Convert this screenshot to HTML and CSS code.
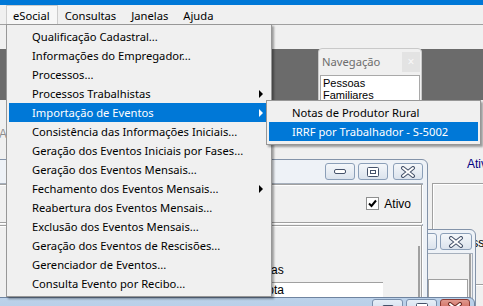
FILE: index.html
```html
<!DOCTYPE html>
<html lang="pt-BR">
    <head>
        <meta charset="UTF-8" />
        <title>eSocial</title>
        <link rel="stylesheet" href="styles.css">
    </head>
    <body>
        <div class="screen">
            <div class="caption"></div>

            <div class="menubar">
                <span class="menu-item open">eSocial</span>
                <span class="menu-item">Consultas</span>
                <span class="menu-item">Janelas</span>
                <span class="menu-item">Ajuda</span>
            </div>

            <div class="workspace">
                <div class="toolstrip"></div>
                <div class="mdi">
                    <!-- form maximized behind the child windows -->
                    <div class="form-back">
                        <span class="faded-label">Ano</span>
                        <span class="status-label">Ativo</span>
                        <div class="etched back-group"></div>
                        <span class="back-label">Classe</span>
                    </div>

                    <div class="nav-panel">
                        <div class="nav-title">
                            <span>Navegação</span>
                            <span class="nav-close">&times;</span>
                        </div>
                        <ul class="nav-list">
                            <li>Pessoas</li>
                            <li>Familiares</li>
                        </ul>
                    </div>

                    <div class="win win-b">
                        <div class="win-title">
                            <span class="cap-btn">
                                <svg width="12" height="6" viewBox="0 0 12 6"><rect x="0.5" y="0.5" width="11" height="4" rx="1.5" fill="#fff" stroke="#45526a"/></svg>
                            </span>
                            <span class="cap-btn">
                                <svg width="12" height="10" viewBox="0 0 12 10"><rect x="0.5" y="0.5" width="11" height="9" rx="1" fill="#fff" stroke="#45526a"/><rect x="3.5" y="3.5" width="5" height="3" fill="none" stroke="#45526a"/></svg>
                            </span>
                            <span class="cap-btn wide">
                                <svg width="16" height="12" viewBox="0 0 16 12"><path d="M3 2 L13 10 M13 2 L3 10" stroke="#45526a" stroke-width="4" stroke-linecap="round"/><path d="M3 2 L13 10 M13 2 L3 10" stroke="#fff" stroke-width="2" stroke-linecap="round"/></svg>
                            </span>
                        </div>
                        <div class="win-client">
                            <div class="b-panel">
                                <div class="b-box"></div>
                            </div>
                        </div>
                    </div>

                    <div class="win win-a">
                        <div class="win-title">
                            <span class="cap-btn">
                                <svg width="12" height="6" viewBox="0 0 12 6"><rect x="0.5" y="0.5" width="11" height="4" rx="1.5" fill="#fff" stroke="#45526a"/></svg>
                            </span>
                            <span class="cap-btn max">
                                <svg width="12" height="10" viewBox="0 0 12 10"><rect x="0.5" y="0.5" width="11" height="9" rx="1" fill="#fff" stroke="#45526a"/><rect x="3.5" y="3.5" width="5" height="3" fill="none" stroke="#45526a"/></svg>
                            </span>
                            <span class="cap-btn">
                                <svg width="16" height="12" viewBox="0 0 16 12"><path d="M3 2 L13 10 M13 2 L3 10" stroke="#45526a" stroke-width="4" stroke-linecap="round"/><path d="M3 2 L13 10 M13 2 L3 10" stroke="#fff" stroke-width="2" stroke-linecap="round"/></svg>
                            </span>
                        </div>
                        <div class="win-client">
                            <div class="etched group-top">
                                <span class="check">
                                    <svg width="11" height="11" viewBox="0 0 11 11"><path d="M2 5.5 L4.5 8 L9 2.5" fill="none" stroke="#000" stroke-width="2"/></svg>
                                </span>
                                <span class="check-text">Ativo</span>
                            </div>
                            <div class="etched group-main">
                                <div class="a-panel">
                                    <span class="field-label">Parcelas</span>
                                    <span class="textbox">Alíquota</span>
                                </div>
                            </div>
                        </div>
                    </div>

                    <div class="win win-c">
                        <div class="win-title">
                            <span class="cap-btn">
                                <svg width="12" height="6" viewBox="0 0 12 6"><rect x="0.5" y="0.5" width="11" height="4" rx="1.5" fill="#fff" stroke="#45526a"/></svg>
                            </span>
                            <span class="cap-btn">
                                <svg width="12" height="10" viewBox="0 0 12 10"><rect x="0.5" y="0.5" width="11" height="9" rx="1" fill="#fff" stroke="#45526a"/><rect x="3.5" y="3.5" width="5" height="3" fill="none" stroke="#45526a"/></svg>
                            </span>
                            <span class="cap-btn close">
                                <svg width="16" height="12" viewBox="0 0 16 12"><path d="M3 2 L13 10 M13 2 L3 10" stroke="#6b2a24" stroke-width="4" stroke-linecap="round"/><path d="M3 2 L13 10 M13 2 L3 10" stroke="#fff" stroke-width="2" stroke-linecap="round"/></svg>
                            </span>
                        </div>
                    </div>
                </div>
            </div>

            <ul class="dropdown main-menu">
                <li>Qualificação Cadastral...</li>
                <li>Informações do Empregador...</li>
                <li>Processos...</li>
                <li class="has-sub">Processos Trabalhistas</li>
                <li class="has-sub active">Importação de Eventos</li>
                <li>Consistência das Informações Iniciais...</li>
                <li>Geração dos Eventos Iniciais por Fases...</li>
                <li>Geração dos Eventos Mensais...</li>
                <li class="has-sub">Fechamento dos Eventos Mensais...</li>
                <li>Reabertura dos Eventos Mensais...</li>
                <li>Exclusão dos Eventos Mensais...</li>
                <li>Geração dos Eventos de Rescisões...</li>
                <li>Gerenciador de Eventos...</li>
                <li>Consulta Evento por Recibo...</li>
            </ul>

            <ul class="dropdown submenu">
                <li>Notas de Produtor Rural</li>
                <li class="active">IRRF por Trabalhador - S-5002</li>
            </ul>
        </div>
    </body>
</html>
```

FILE: styles.css
```css
body {
    margin: 0;
    background: #f0f0f0;
    font-family: "Noto Sans", sans-serif;
    font-size: 11.2px;
    color: #000;
}
.screen {
    position: relative;
    width: 483px;
    height: 306px;
    overflow: hidden;
    background: #f0f0f0;
}
.caption {
    height: 5px;
    background: #0078d7;
}

/* menu bar */
.menubar {
    display: flex;
    height: 19px;
    padding-left: 6px;
    background: #f0f0f0;
}
.menu-item {
    padding: 0 7px 0 6px;
    line-height: 19px;
    border: 1px solid transparent;
    border-bottom: 0;
}
.menu-item.open {
    background: #f7f7f7;
    border-color: #cccccc;
}

/* area under the menu */
.workspace {
    position: absolute;
    top: 24px;
    left: 0;
    right: 0;
    bottom: 0;
    display: flex;
    flex-direction: column;
}
.toolstrip {
    height: 24px;
    border-top: 1px solid #a0a0a0;
    background: #f0f0f0;
}
.mdi {
    flex: 1;
    position: relative;
    background: #6b6b6b;
}

.form-back {
    position: absolute;
    top: 51px;
    left: 0;
    right: 0;
    bottom: 0;
    background: #f0f0f0;
    font-family: "Liberation Sans", sans-serif;
    font-size: 12px;
}
.faded-label {
    position: absolute;
    left: -1px;
    top: 27px;
    color: #8d8d8d;
}
.status-label {
    position: absolute;
    left: 467px;
    top: 57px;
    color: #000080;
    line-height: 14px;
}
.back-group {
    position: absolute;
    left: 432px;
    top: 83px;
    width: 80px;
    height: 100px;
}
.back-label {
    position: absolute;
    right: -8px;
    top: 136px;
    line-height: 14px;
}

.etched {
    border: 1px solid #a0a0a0;
    box-shadow: inset 1px 1px #ffffff, 1px 1px #ffffff;
}

/* navigation panel */
.nav-panel {
    position: absolute;
    left: 318px;
    top: -1px;
    width: 102px;
    height: 70px;
    background: #f0f0f0;
    border: 1px solid #c9c9c9;
    border-radius: 4px 4px 0 0;
}
.nav-title {
    display: flex;
    justify-content: space-between;
    height: 26px;
    line-height: 26px;
    padding-left: 3px;
    color: #6d6d6d;
}
.nav-close {
    width: 18px;
    height: 20px;
    margin: 3px 1px 0 0;
    line-height: 19px;
    text-align: center;
    background: #e3e3e3;
    color: #f9f9f9;
    font-size: 12px;
}
.nav-list {
    list-style: none;
    margin: 0 1px;
    padding: 1px 2px;
    height: 60px;
    background: #fff;
    border: 1px solid #a9a9a9;
    font-family: "Liberation Sans", sans-serif;
    font-size: 11px;
    line-height: 12px;
}

/* child windows */
.win {
    position: absolute;
    display: flex;
    flex-direction: column;
    background: #eef2f7;
    border: 1px solid #8393a9;
    border-radius: 6px 6px 0 0;
}
.win-title {
    display: flex;
    justify-content: flex-end;
    align-items: flex-start;
    gap: 3px;
    height: 23px;
    padding: 3px 4px 0 0;
    box-sizing: border-box;
}
.cap-btn {
    display: flex;
    align-items: center;
    justify-content: center;
    width: 28px;
    height: 15px;
    border: 1px solid #8b9fb8;
    border-radius: 3px;
    background: linear-gradient(#f4f7fa, #dbe3ed);
}
.cap-btn.max {
    margin-right: 2px;
}
.win-client {
    flex: 1;
    display: flex;
    flex-direction: column;
    margin: 0 4px;
    background: #f0f0f0;
    border: 1px solid #a6b0bd;
    border-bottom: 0;
    font-family: "Liberation Sans", sans-serif;
    font-size: 12px;
}

.win-a {
    left: -10px;
    top: 110px;
    width: 436px;
    height: 200px;
}
.group-top {
    display: flex;
    justify-content: flex-end;
    align-items: center;
    gap: 5px;
    height: 37px;
    padding-right: 10px;
}
.check {
    display: flex;
    align-items: center;
    justify-content: center;
    width: 11px;
    height: 11px;
    background: #fff;
    border: 1px solid #8e8f8f;
}
.group-main {
    flex: 1;
    margin-top: 2px;
    padding-top: 20px;
}
.a-panel {
    display: grid;
    grid-template-columns: 240px 146px;
    grid-template-rows: 14px 15px;
    row-gap: 5px;
    align-content: start;
    height: 100%;
    margin-right: 1px;
    padding-top: 17px;
    border-right: 2px solid #a0a0a0;
}
.field-label {
    grid-column: 2;
    line-height: 14px;
}
.textbox {
    grid-column: 2;
    line-height: 14px;
    padding-left: 3px;
    background: #fff;
    border-top: 1px solid #a0a0a0;
}

.win-b {
    left: 280px;
    top: 180px;
    width: 194px;
    height: 140px;
}
.win-b .win-title {
    padding-right: 3px;
}
.cap-btn.wide {
    width: 30px;
}
.win-b .win-client {
    margin: 0 2px 0 4px;
}
.b-panel {
    flex: 1;
    margin-right: 1px;
    padding-top: 25px;
    border-right: 2px solid #a0a0a0;
}
.b-box {
    width: 40px;
    height: 40px;
    margin: 0 1px 0 auto;
    background: #fff;
    border: 1px solid #a0a0a0;
    box-sizing: border-box;
}

.win-c {
    left: -10px;
    top: 248px;
    width: 483px;
    height: 40px;
    background: linear-gradient(#bcd2ea, #adc6e2);
    border-color: #6f84a0;
}
.win-c .win-title {
    padding-top: 1px;
}
.win-c .cap-btn {
    width: 29px;
    border-color: #7a90ad;
    background: linear-gradient(#e6eef7, #c9d8ea);
}
.win-c .cap-btn.close {
    width: 28px;
    border-color: #8b3a33;
    background: linear-gradient(#e09a90, #c4473b);
}

/* drop-down menus */
.dropdown {
    position: absolute;
    margin: 0;
    padding: 2px 2px 3px;
    list-style: none;
    background: #f0f0f0;
    border: 1px solid #979797;
    box-shadow: 2px 2px 2px rgba(0, 0, 0, 0.35);
}
.dropdown li {
    position: relative;
    height: 19px;
    line-height: 19px;
    padding-left: 23px;
    white-space: nowrap;
}
.dropdown li.active {
    background: #0078d7;
    color: #fff;
}
.dropdown li.has-sub::after {
    content: "";
    position: absolute;
    right: 6px;
    top: 6px;
    border-left: 4px solid #000;
    border-top: 4px solid transparent;
    border-bottom: 4px solid transparent;
}
.dropdown li.has-sub.active::after {
    border-left-color: #fff;
}
.main-menu {
    left: 6px;
    top: 24px;
    width: 260px;
}
.submenu {
    left: 266px;
    top: 100px;
    width: 209px;
}
```
